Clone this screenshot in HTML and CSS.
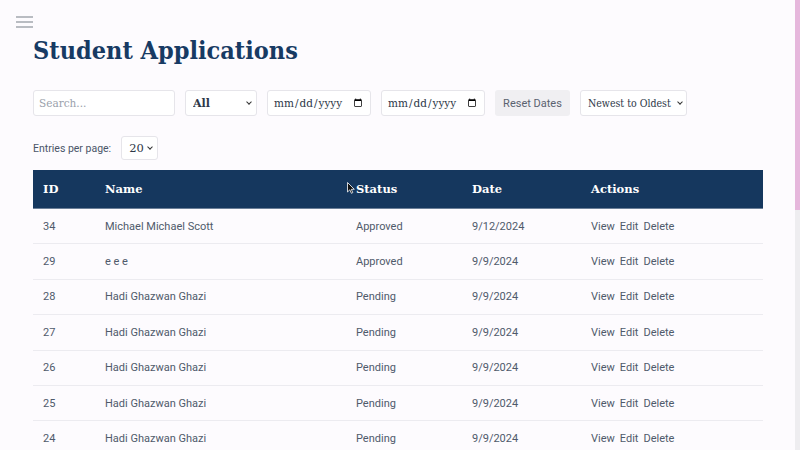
FILE: index.html
```html
<!DOCTYPE html>
<html lang="en">
<head>
<meta charset="utf-8">
<title>Student Applications</title>
<link rel="stylesheet" href="styles.css">
</head>
<body>
<button class="menu-btn" aria-label="Menu">
  <span></span><span></span><span></span>
</button>
<main class="page">
  <h1 class="title">Student Applications</h1>
  <div class="filters">
    <input class="field search" type="text" placeholder="Search...">
    <span class="select-wrap status-wrap"><select class="field status-select"><option>All</option><option>Pending</option><option>Approved</option></select></span>
    <input class="field date" type="date">
    <input class="field date" type="date">
    <button class="reset">Reset Dates</button>
    <span class="select-wrap sort-wrap"><select class="field sort"><option>Newest to Oldest</option><option>Oldest to Newest</option></select></span>
  </div>
  <div class="entries">
    <label class="entries-label">Entries per page:</label>
    <span class="select-wrap per-wrap"><select class="field per-page"><option>20</option><option>10</option><option>50</option></select></span>
  </div>
  <div class="table-wrap">
    <table class="apps">
      <colgroup>
        <col class="c-id"><col class="c-name"><col class="c-status"><col class="c-date"><col class="c-actions">
      </colgroup>
      <thead>
        <tr><th>ID</th><th>Name</th><th>Status</th><th>Date</th><th>Actions</th></tr>
      </thead>
      <tbody>
        <tr><td>34</td><td>Michael Michael Scott</td><td>Approved</td><td>9/12/2024</td><td class="acts"><a>View</a><a>Edit</a><a>Delete</a></td></tr>
        <tr><td>29</td><td>e e e</td><td>Approved</td><td>9/9/2024</td><td class="acts"><a>View</a><a>Edit</a><a>Delete</a></td></tr>
        <tr><td>28</td><td>Hadi Ghazwan Ghazi</td><td>Pending</td><td>9/9/2024</td><td class="acts"><a>View</a><a>Edit</a><a>Delete</a></td></tr>
        <tr><td>27</td><td>Hadi Ghazwan Ghazi</td><td>Pending</td><td>9/9/2024</td><td class="acts"><a>View</a><a>Edit</a><a>Delete</a></td></tr>
        <tr><td>26</td><td>Hadi Ghazwan Ghazi</td><td>Pending</td><td>9/9/2024</td><td class="acts"><a>View</a><a>Edit</a><a>Delete</a></td></tr>
        <tr><td>25</td><td>Hadi Ghazwan Ghazi</td><td>Pending</td><td>9/9/2024</td><td class="acts"><a>View</a><a>Edit</a><a>Delete</a></td></tr>
        <tr><td>24</td><td>Hadi Ghazwan Ghazi</td><td>Pending</td><td>9/9/2024</td><td class="acts"><a>View</a><a>Edit</a><a>Delete</a></td></tr>
      </tbody>
    </table>
    <svg class="cursor" width="8" height="12" viewBox="0 0 8 12" aria-hidden="true">
      <path d="M0.5 0.5 L0.5 10 L2.8 7.8 L4.4 11.3 L5.8 10.6 L4.3 7.3 L7.3 7.3 Z" fill="#111" stroke="#fff" stroke-width="0.8"/>
    </svg>
  </div>
</main>
<div class="scrollbar" aria-hidden="true"><div class="thumb"></div></div>
</body>
</html>
```
FILE: styles.css
```css
html {
  background: #fdfbfe;
  overflow: hidden;
}
body {
  margin: 0;
  height: 450px;
  overflow: hidden;
  background: #fdfbfe;
  font-family: "Roboto", "Liberation Sans", sans-serif;
  color: #4a5568;
}
.scrollbar {
  position: fixed;
  top: 0;
  right: 0;
  width: 5px;
  height: 450px;
  background: #eeedf0;
}
.scrollbar .thumb {
  height: 210px;
  background: #e6b7dc;
}
.menu-btn {
  position: absolute;
  left: 16px;
  top: 16px;
  width: 17px;
  height: 12px;
  padding: 0;
  border: 0;
  background: transparent;
  display: flex;
  flex-direction: column;
  justify-content: space-between;
}
.menu-btn span {
  display: block;
  height: 2px;
  background: #b9bcc2;
}
.page {
  padding: 34px 37px 0 33px;
}
.title {
  margin: 0 0 22px;
  font-family: "DejaVu Serif", "Liberation Serif", serif;
  font-weight: 700;
  font-size: 25px;
  font-stretch: condensed;
  line-height: 34px;
  color: #173a63;
}
.filters {
  display: flex;
  gap: 10px;
  height: 26px;
}
.field {
  box-sizing: border-box;
  height: 26px;
  border: 1px solid #e6e5ea;
  border-radius: 3px;
  background: #fff;
  font-family: "DejaVu Serif", "Liberation Serif", serif;
  font-size: 10.5px;
  color: #2d3748;
  padding: 0 5px;
}
.select-wrap {
  position: relative;
  display: block;
}
.select-wrap select {
  appearance: none;
  -webkit-appearance: none;
  display: block;
}
.select-wrap::after {
  content: "";
  position: absolute;
  top: 50%;
  right: 6px;
  width: 3px;
  height: 3px;
  margin-top: -3px;
  border-right: 1.2px solid #333;
  border-bottom: 1.2px solid #333;
  transform: rotate(45deg);
  pointer-events: none;
}
.search {
  width: 142px;
}
.search::placeholder {
  color: #9aa1ab;
}
.status-select {
  width: 72px;
  font-weight: 700;
  font-size: 11px;
  padding-left: 7px;
}
.date {
  width: 104px;
}
.reset {
  width: 75px;
  height: 26px;
  border: 0;
  border-radius: 3px;
  background: #f0eff2;
  font-family: "Roboto", "Liberation Sans", sans-serif;
  font-size: 11px;
  color: #5a6270;
  padding: 0;
}
.sort {
  width: 107px;
  padding: 0 2px 0 7px;
  font-stretch: condensed;
  font-size: 10.5px;
}
.sort-wrap::after {
  right: 5px;
}
.entries {
  display: flex;
  align-items: center;
  gap: 10px;
  margin-top: 20px;
  height: 24px;
}
.entries-label {
  font-size: 10.5px;
  color: #4a5568;
}
.per-page {
  width: 37px;
  height: 24px;
  font-size: 11.5px;
  padding: 0 0 0 7px;
}
.table-wrap {
  position: relative;
  margin-top: 10px;
}
.apps {
  width: 730px;
  border-collapse: collapse;
  table-layout: fixed;
}
.c-id { width: 62px; }
.c-name { width: 251px; }
.c-status { width: 116px; }
.c-date { width: 119px; }
.c-actions { width: 182px; }
.apps thead tr {
  background: #15375e;
}
.apps th {
  height: 38px;
  padding: 0 10px;
  text-align: left;
  font-family: "DejaVu Serif", "Liberation Serif", serif;
  font-weight: 700;
  font-size: 11.5px;
  color: #ffffff;
  border-bottom: 1px solid #6b7f98;
}
.apps td {
  height: 34.4px;
  padding: 0 10px;
  font-size: 11px;
  color: #4f5a6b;
  border-bottom: 1px solid #ecebf0;
}
.acts a {
  margin-right: 5px;
  color: #4f5a6b;
}
.cursor {
  position: absolute;
  left: 314px;
  top: 12px;
}
```
